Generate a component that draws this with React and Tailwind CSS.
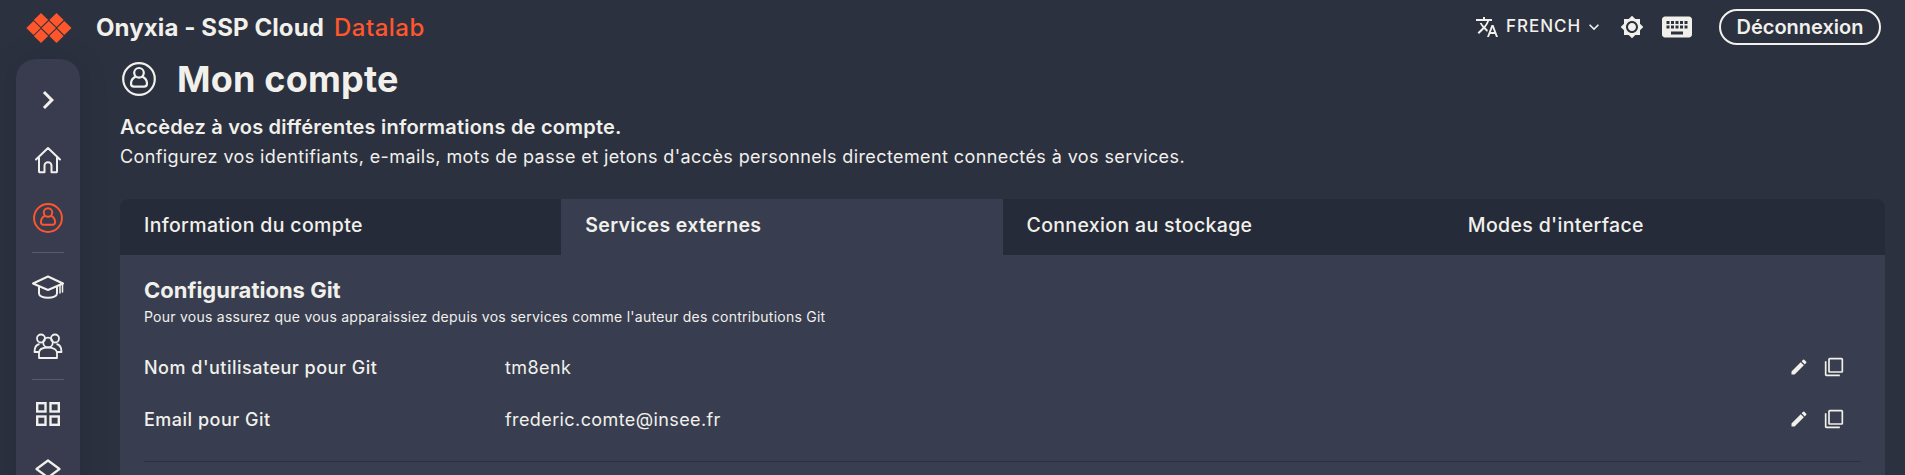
import React from 'react';
import { MdTranslate, MdExpandMore, MdBrightness7, MdKeyboard, MdEdit, MdFilterNone, MdChevronRight } from 'react-icons/md';

const AccountIcon = ({ className }) => (
  <svg viewBox="0 0 34 34" fill="none" stroke="currentColor" strokeWidth="2.200" className={className}>
    <circle cx="17" cy="17" r="15.800" />
    <circle cx="17" cy="10.800" r="4.800" />
    <path d="M13.800 14.400C10.500 16 9 19 9 21.500c0 2 1.400 3.200 3 3.200h10c1.600 0 3-1.200 3-3.200 0-2.500-1.500-5.500-4.800-7.100" />
  </svg>
);

const Logo = () => (
  <svg viewBox="0 0 46 30" className="w-[46px] h-[30px]" fill="#ff562c">
    <path d="M15 0l7.200 7-7.200 7-7.200-7z" />
    <path d="M30.500 0l7.200 7-7.200 7-7.200-7z" />
    <path d="M7.500 8l7.200 7-7.200 7-7.200-7z" />
    <path d="M22.800 8l7.200 7-7.200 7-7.200-7z" />
    <path d="M38.300 8l7.200 7-7.200 7-7.200-7z" />
    <path d="M15 16l7.200 7-7.200 7-7.200-7z" />
    <path d="M30.500 16l7.200 7-7.200 7-7.200-7z" />
  </svg>
);

const Divider = () => <div className="h-px w-8 bg-[#565b6b] shrink-0" />;

const Sidebar = () => (
  <aside className="ml-4 mt-[5px] w-16 shrink-0 h-[440px] rounded-t-[20px] bg-[#383c4e] shadow-[0_0_30px_rgba(0,0,0,0.12)] flex flex-col items-center text-[#f1f0eb]">
    <MdChevronRight className="w-9 h-9 mt-[23px] shrink-0" />
    <svg viewBox="0 0 28 28" fill="none" stroke="currentColor" strokeWidth="2" strokeLinejoin="round" strokeLinecap="round" className="w-7 h-7 mt-[28px] shrink-0">
      <path d="M2 13.500 14 2l12 11.500M5 11.500V25.500a.800.800 0 0 0 .800.800H10.500v-6.500a3.500 3.500 0 0 1 7 0v6.500h4.700a.800.800 0 0 0 .800-.800V11.500" />
    </svg>
    <AccountIcon className="w-[30px] h-[30px] mt-[29px] shrink-0 text-[#ff562c]" />
    <div className="mt-[19px] shrink-0"><Divider /></div>
    <svg viewBox="0 0 32 24" fill="none" stroke="currentColor" strokeWidth="2" strokeLinejoin="round" strokeLinecap="round" className="w-8 h-6 mt-[22px] shrink-0">
      <path d="M16 1.500 31 8.500 16 15 1 8.500z" />
      <path d="M7 12v6.500c0 2.500 4 4.200 9 4.200s9-1.700 9-4.200V12" />
      <path d="M28 10v8M30.500 9v8" strokeWidth="1.500" />
    </svg>
    <svg viewBox="0 0 30 26" fill="none" stroke="currentColor" strokeWidth="1.800" strokeLinejoin="round" className="w-[30px] h-[26px] mt-[34px] shrink-0">
      <circle cx="15" cy="9.500" r="4.800" />
      <circle cx="8" cy="5.500" r="4" />
      <circle cx="22" cy="5.500" r="4" />
      <path d="M6 25v-5c0-3.500 3.500-5.500 9-5.500s9 2 9 5.500v5z" />
      <path d="M6 19H1.500c0-4.500 2-7.500 5-8M24 19h4.500c0-4.500-2-7.500-5-8" />
    </svg>
    <div className="mt-[20px] shrink-0"><Divider /></div>
    <svg viewBox="0 0 24 24" fill="none" stroke="currentColor" strokeWidth="2.400" className="w-6 h-6 mt-[22px] shrink-0">
      <rect x="1.200" y="1.200" width="8.300" height="8.300" />
      <rect x="14.500" y="1.200" width="8.300" height="8.300" />
      <rect x="1.200" y="14.500" width="8.300" height="8.300" />
      <rect x="14.500" y="14.500" width="8.300" height="8.300" />
    </svg>
    <svg viewBox="0 0 26 26" fill="none" stroke="currentColor" strokeWidth="2.200" strokeLinejoin="round" className="w-[26px] h-[26px] mt-[33px] shrink-0">
      <path d="M13 1.500 24.500 10 13 18.500 1.500 10z" />
    </svg>
  </aside>
);

const Tab = ({ label, active }) => (
  <div className={active
    ? 'flex-1 h-14 flex items-center pl-[24px] pb-[2px] bg-[#383e50] text-[19.500px] tracking-[0.35px] font-semibold'
    : 'flex-1 h-14 flex items-center pl-[24px] pb-[2px] bg-[#262b39] text-[19.500px] tracking-[0.35px] font-medium'}>
    {label}
  </div>
);

const Row = ({ label, value }) => (
  <div className="h-[52px] flex items-center text-[18px]">
    <span className="w-[361px] font-medium tracking-[0.5px]">{label}</span>
    <span className="flex-1 tracking-[0.4px]">{value}</span>
    <MdEdit className="w-5 h-5" />
    <MdFilterNone className="w-5 h-5 ml-[15px] mr-[17px]" />
  </div>
);

export default function App() {
  return (
    <div className="w-[1905px] h-[475px] overflow-hidden bg-[#2c3140] text-[#f1f0eb] font-['Inter',sans-serif]">
      <header className="h-[54px] flex items-center">
        <div className="ml-[26px] mr-[24px] mt-px"><Logo /></div>
        <span className="text-[24px] leading-none font-bold tracking-[0.1px] pt-[2px]">Onyxia - SSP Cloud</span>
        <span className="ml-[10px] text-[24px] leading-none font-medium tracking-[0.5px] text-[#ff562c] pt-[2px]">Datalab</span>
        <div className="ml-auto flex items-center">
          <MdTranslate className="w-6 h-6" />
          <span className="ml-[7px] text-[17px] font-medium tracking-[0.95px]">FRENCH</span>
          <MdExpandMore className="w-5 h-5 ml-[3px]" />
          <MdBrightness7 className="w-6 h-6 ml-[16px]" />
          <MdKeyboard className="w-9 h-9 ml-[15px]" />
          <div className="ml-[24px] mr-6 w-[162px] h-[36px] rounded-[18px] border-2 border-[#f1f0eb] flex items-center justify-center text-[20px] font-semibold">
            Déconnexion
          </div>
        </div>
      </header>

      <div className="flex">
        <Sidebar />
        <main className="ml-10 flex-1 mr-5 min-w-0">
          <div className="flex items-center h-[44px] mt-[3px]">
            <AccountIcon className="w-[34px] h-[34px] ml-[2px]" />
            <h1 className="ml-[21px] text-[36px] leading-none font-bold tracking-[0.2px]">Mon compte</h1>
          </div>
          <p className="mt-[14px] text-[20px] leading-6 font-semibold tracking-[0.2px]">Accèdez à vos différentes informations de compte.</p>
          <p className="mt-[6px] text-[18px] leading-6 tracking-[0.4px]">Configurez vos identifiants, e-mails, mots de passe et jetons d'accès personnels directement connectés à vos services.</p>
          <section className="mt-[30px] rounded-t-lg overflow-hidden bg-[#383e50] h-[300px]">
            <div className="flex">
              <Tab label="Information du compte" />
              <Tab label="Services externes" active />
              <Tab label="Connexion au stockage" />
              <Tab label="Modes d'interface" />
            </div>
            <div className="px-6 pt-[25px]">
              <h2 className="text-[22px] leading-5 font-bold">Configurations Git</h2>
              <p className="mt-[9px] text-[14px] leading-4 tracking-[0.25px]">Pour vous assurez que vous apparaissiez depuis vos services comme l'auteur des contributions Git</p>
              <div className="mt-[16px]">
                <Row label="Nom d'utilisateur pour Git" value="tm8enk" />
                <Row label="Email pour Git" value="frederic.comte@insee.fr" />
              </div>
              <div className="mt-4 h-px bg-[#2c3140]" />
            </div>
          </section>
        </main>
      </div>
    </div>
  );
}
